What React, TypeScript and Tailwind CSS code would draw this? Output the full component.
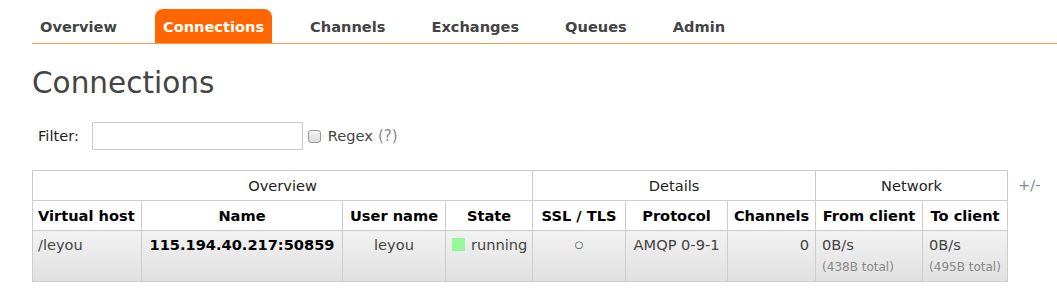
import React from "react";

const tabs = ["Overview", "Connections", "Channels", "Exchanges", "Queues", "Admin"];

export default function App() {
  return (
    <div className="w-[1057px] h-[306px] bg-white overflow-hidden text-[#444]" style={{ fontFamily: '"DejaVu Sans", Verdana, sans-serif' }}>
      <div className="pl-[32px] pt-[9px]">
        <ul className="flex border-b border-[#f39a4a]">
          {tabs.map((t) => (
            <li key={t} className="mr-[30px]">
              <span
                className={
                  "block px-[8px] h-[34px] pt-[1px] leading-[34px] text-[14.6px] font-bold rounded-t-[8px] " +
                  (t === "Connections" ? "bg-[#ff6600] text-white" : "text-[#444]")
                }
              >
                {t}
              </span>
            </li>
          ))}
        </ul>
      </div>
      <div className="pl-[32px]">
        <h1 className="text-[29.5px] leading-[36px] mt-[21px] text-[#444] font-normal">Connections</h1>
        <div className="flex items-center mt-[21px] pl-[6px] text-[14.6px]">
          <span className="text-[#222]">Filter:</span>
          <div className="ml-[13px] w-[211px] h-[28px] border border-[#ccc] bg-white" />
          <span className="ml-[5px] w-[13px] h-[13px] rounded-[3px] border border-[#999] bg-gradient-to-b from-[#f4f4f4] to-[#dcdcdc]" />
          <span className="ml-[7px] text-[#444]">Regex</span>
          <span className="ml-[5px] text-[#888] text-[15px]">(?)</span>
        </div>
        <div className="flex items-start mt-[20px]">
          <table className="border-collapse table-fixed w-[975px] text-[14.6px]">
            <colgroup>
              <col className="w-[109px]" />
              <col className="w-[201px]" />
              <col className="w-[103px]" />
              <col className="w-[87px]" />
              <col className="w-[93px]" />
              <col className="w-[102px]" />
              <col className="w-[88px]" />
              <col className="w-[107px]" />
              <col className="w-[85px]" />
            </colgroup>
            <thead>
              <tr className="h-[30px]">
                <th colSpan={4} className="border border-[#ccc] font-normal text-[#222] text-center">Overview</th>
                <th colSpan={3} className="border border-[#ccc] font-normal text-[#222] text-center">Details</th>
                <th colSpan={2} className="border border-[#ccc] font-normal text-[#222] text-center">Network</th>
              </tr>
              <tr className="h-[30px] text-black">
                <th className="border border-[#ccc] text-left pl-[5px] font-bold whitespace-nowrap">Virtual host</th>
                <th className="border border-[#ccc] text-center font-bold">Name</th>
                <th className="border border-[#ccc] text-center font-bold whitespace-nowrap">User name</th>
                <th className="border border-[#ccc] text-center font-bold">State</th>
                <th className="border border-[#ccc] text-center font-bold whitespace-nowrap">SSL / TLS</th>
                <th className="border border-[#ccc] text-center font-bold">Protocol</th>
                <th className="border border-[#ccc] text-center font-bold">Channels</th>
                <th className="border border-[#ccc] text-center font-bold whitespace-nowrap">From client</th>
                <th className="border border-[#ccc] text-center font-bold whitespace-nowrap">To client</th>
              </tr>
            </thead>
            <tbody>
              <tr className="h-[51px] bg-gradient-to-b from-[#f2f2f2] to-[#e0e0e0]">
                <td className="border border-[#ccc] align-top pt-[3px] pl-[5px] text-[#444]">/leyou</td>
                <td className="border border-[#ccc] align-top pt-[3px] text-center font-bold text-black">115.194.40.217:50859</td>
                <td className="border border-[#ccc] align-top pt-[3px] text-center text-[#444]">leyou</td>
                <td className="border border-[#ccc] align-top pt-[3px] pl-[6px] text-[#444]">
                  <span className="inline-flex items-center">
                    <span className="w-[13px] h-[13px] bg-[#98f898] mr-[6px]" />
                    running
                  </span>
                </td>
                <td className="border border-[#ccc] align-top pt-[3px] text-center text-[#444] text-[10px]"><span className="leading-[22px]">○</span></td>
                <td className="border border-[#ccc] align-top pt-[3px] text-center text-[#444]">AMQP 0-9-1</td>
                <td className="border border-[#ccc] align-top pt-[3px] text-right pr-[6px] text-[#444]">0</td>
                <td className="border border-[#ccc] align-top pt-[3px] pl-[6px] text-[#444]">
                  <div>0B/s</div>
                  <div className="text-[12px] text-[#888] mt-[2px]">(438B total)</div>
                </td>
                <td className="border border-[#ccc] align-top pt-[3px] pl-[6px] text-[#444]">
                  <div>0B/s</div>
                  <div className="text-[12px] text-[#888] mt-[2px]">(495B total)</div>
                </td>
              </tr>
            </tbody>
          </table>
          <span className="ml-[10px] mt-[4px] text-[14.6px] text-[#888]">+/-</span>
        </div>
      </div>
    </div>
  );
}
